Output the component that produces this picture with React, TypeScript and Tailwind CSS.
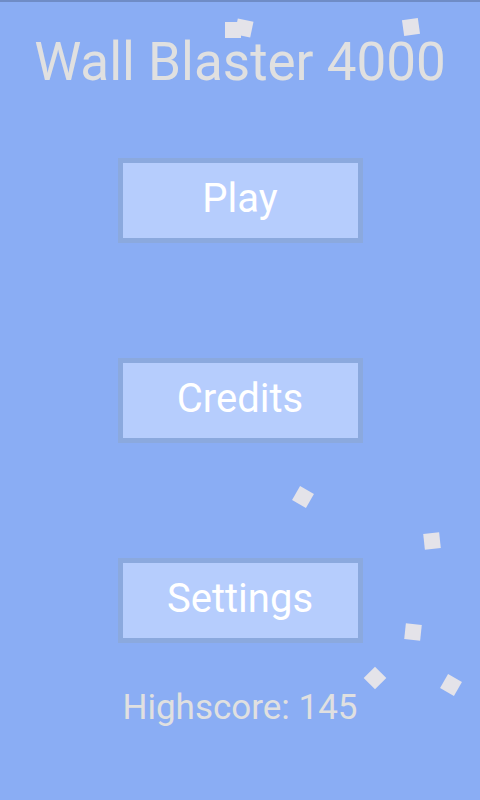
import React from "react";

const squares = [
  { x: 225, y: 22, r: 0 },
  { x: 236, y: 20, r: 12 },
  { x: 403, y: 19, r: -8 },
  { x: 295, y: 489, r: 30 },
  { x: 424, y: 533, r: -6 },
  { x: 405, y: 624, r: 6 },
  { x: 367, y: 670, r: 45 },
  { x: 443, y: 677, r: 30 },
];

function Btn({ label }: { label: string }) {
  return (
    <div className="mx-auto w-[245px] h-[85px] border-[5px] border-[#8ba9de] bg-[#b6cdfd] flex items-center justify-center pb-[3px] shrink-0">
      <span className="text-white text-[40px] leading-[40px]">{label}</span>
    </div>
  );
}

export default function App() {
  return (
    <div
      className="relative w-[480px] h-[800px] overflow-hidden bg-[#8aadf4] flex flex-col"
      style={{ fontFamily: "Roboto, 'Noto Sans', sans-serif" }}
    >
      <div className="h-[2px] bg-[#6f8cc6] shrink-0" />
      <div className="mt-[34px] text-center text-[53px] leading-[53px] text-[#e0e0e0] shrink-0">
        Wall Blaster 4000
      </div>
      <div className="mt-[69px]">
        <Btn label="Play" />
      </div>
      <div className="mt-[115px]">
        <Btn label="Credits" />
      </div>
      <div className="mt-[115px]">
        <Btn label="Settings" />
      </div>
      <div className="mt-[47px] text-center text-[35px] leading-[35px] text-[#e0e0e0]">
        Highscore: 145
      </div>
      {squares.map((s, i) => (
        <div
          key={i}
          className="absolute w-[16px] h-[16px] bg-[#e4e3e9]"
          style={{ left: s.x, top: s.y, transform: `rotate(${s.r}deg)` }}
        />
      ))}
    </div>
  );
}
